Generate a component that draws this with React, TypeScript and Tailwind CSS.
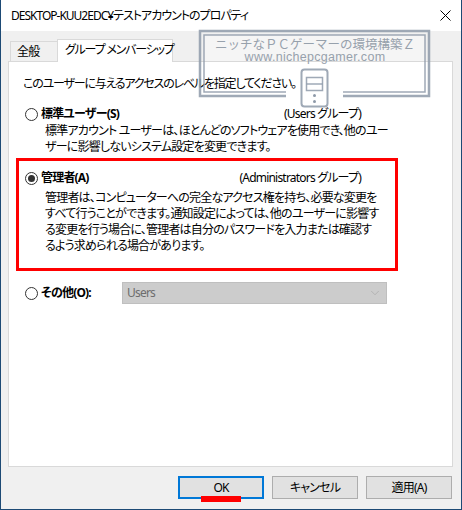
import { ChevronDown } from 'lucide-react'

const Radio = ({ checked }: { checked?: boolean }) => (
  <span className="flex h-[13px] w-[13px] shrink-0 items-center justify-center rounded-full border border-[#333333] bg-white">
    {checked && <span className="h-[7px] w-[7px] rounded-full bg-[#333333]" />}
  </span>
)

// 透かしロゴ (枠とPCアイコン)
const Watermark = () => (
  <div className="pointer-events-none absolute left-[196px] top-[28px] h-[82px] w-[236px] tracking-normal">
    <svg width="236" height="82" viewBox="0 0 236 82" className="absolute left-0 top-0">
      <rect x="7" y="7" width="221" height="26" fill="#ffffff" fillOpacity="0.35" />
      <g fill="none" stroke="#8e9aa9" strokeOpacity="0.85">
        <path d="M89 68 H3 V3 H232 V68 H146" strokeWidth="2.5" />
        <path d="M89 64 H7 V7 H228 V64 H146" strokeWidth="1.5" />
        <rect x="104.5" y="41.5" width="26" height="37" rx="3" strokeWidth="2" />
        <rect x="109.5" y="49.5" width="16" height="13" strokeWidth="1.5" />
        <path d="M109.5 56 H125.5" strokeWidth="1.5" />
      </g>
      <circle cx="117.5" cy="67.5" r="1.5" fill="#8e9aa9" />
      <circle cx="117.5" cy="73.5" r="1.5" fill="#8e9aa9" />
    </svg>
    <div className="absolute left-0 top-[9px] w-full text-center text-[12.5px] leading-[16px] text-[#97a1ac] [font-feature-settings:normal]">
      ニッチなＰＣゲーマーの環境構築Ｚ
    </div>
    <div className="absolute left-0 top-[22px] w-full text-center font-['Liberation_Sans',sans-serif] text-[12.5px] leading-[14px] tracking-[0.3px] text-[#97a1ac]">
      www.nichepcgamer.com
    </div>
  </div>
)

const App = () => {
  return (
    <div className="relative flex h-[510px] w-[462px] flex-col whitespace-nowrap border-x border-b border-[#1d4a75] bg-[#f0f0f0] font-['Noto_Sans','Noto_Sans_CJK_JP',sans-serif] text-[12px] tracking-[-0.8px] text-black [font-feature-settings:'palt']">
      {/* タイトルバー */}
      <div className="flex h-[31px] shrink-0 items-center justify-between bg-white pl-[10px] pr-[10px]">
        <span className="leading-[16px] tracking-[-1px]">DESKTOP-KUU2EDC¥テストアカウントのプロパティ</span>
        <svg width="11" height="11" viewBox="0 0 11 11">
          <path d="M0.5 0.5 L10.5 10.5 M10.5 0.5 L0.5 10.5" stroke="#000" strokeWidth="1" />
        </svg>
      </div>

      <div className="flex flex-1 flex-col pl-[7px] pr-[9px] pt-[8px]">
        {/* タブ */}
        <div className="flex h-[22px] items-end">
          <div className="ml-[2px] flex h-[20px] w-[48px] items-center border border-b-0 border-[#d9d9d9] bg-[#f0f0f0] pl-[6px] leading-[16px]">
            全般
          </div>
          <div className="relative z-10 -mb-px -ml-px flex h-[23px] w-[116px] items-center border border-b-0 border-[#d9d9d9] bg-white pb-[2px] pl-[7px] leading-[16px] tracking-[-1.2px]">
            グループ メンバーシップ
          </div>
        </div>

        {/* パネル */}
        <div className="flex h-[406px] w-[445px] flex-col border border-[#d9d9d9] bg-white pl-[14px]">
          <p className="mt-[14px] leading-[16px] tracking-[-1.2px]">このユーザーに与えるアクセスのレベルを指定してください。</p>

          <div className="ml-[2px] mt-[14px] flex h-[16px] w-[336px] items-center justify-between">
            <div className="flex items-center gap-[3px]">
              <Radio />
              <span className="font-bold leading-[16px]">標準ユーザー(S)</span>
            </div>
            <span className="leading-[16px]">(Users グループ)</span>
          </div>
          <p className="ml-[22px] mt-[1px] leading-[16px]">
            標準アカウント ユーザーは、ほとんどのソフトウェアを使用でき、他のユー
            <br />
            ザーに影響しないシステム設定を変更できます。
          </p>

          <div className="-ml-[7px] mt-[3px] h-[113px] w-[382px] border-[3px] border-[#ff0000] pl-[6px] pt-[9px]">
            <div className="flex h-[16px] w-[336px] items-center justify-between">
              <div className="flex items-center gap-[3px]">
                <Radio checked />
                <span className="font-bold leading-[16px]">管理者(A)</span>
              </div>
              <span className="leading-[16px]">(Administrators グループ)</span>
            </div>
            <p className="ml-[20px] mt-[4px] leading-[16px]">
              管理者は、コンピューターへの完全なアクセス権を持ち、必要な変更を
              <br />
              すべて行うことができます。通知設定によっては、他のユーザーに影響す
              <br />
              る変更を行う場合に、管理者は自分のパスワードを入力または確認す
              <br />
              るよう求められる場合があります。
            </p>
          </div>

          <div className="ml-[2px] mt-[11px] flex h-[22px] items-center">
            <div className="flex w-[97px] items-center gap-[3px]">
              <Radio />
              <span className="font-bold leading-[16px]">その他(O):</span>
            </div>
            <div className="flex h-[22px] w-[265px] items-center justify-between border border-[#bfbfbf] bg-[#cccccc] pl-[4px] pr-[4px]">
              <span className="leading-[16px] text-[#6d6d6d]">Users</span>
              <ChevronDown size={14} strokeWidth={1} color="#a0a0a0" />
            </div>
          </div>
        </div>

        {/* ボタン */}
        <div className="mt-[9px] flex justify-end gap-[8px]">
          <button type="button" className="relative h-[23px] w-[86px] border-2 border-[#0078d7] bg-[#e1e1e1] leading-[16px]">
            OK
            <span className="absolute left-[21px] top-[18px] h-[6px] w-[40px] bg-[#ff0000]" />
          </button>
          <button type="button" className="h-[23px] w-[86px] border border-[#adadad] bg-[#e1e1e1] leading-[16px]">
            キャンセル
          </button>
          <button type="button" className="h-[23px] w-[86px] border border-[#adadad] bg-[#e1e1e1] leading-[16px]">
            適用(A)
          </button>
        </div>
      </div>

      <Watermark />
    </div>
  )
}

export default App
